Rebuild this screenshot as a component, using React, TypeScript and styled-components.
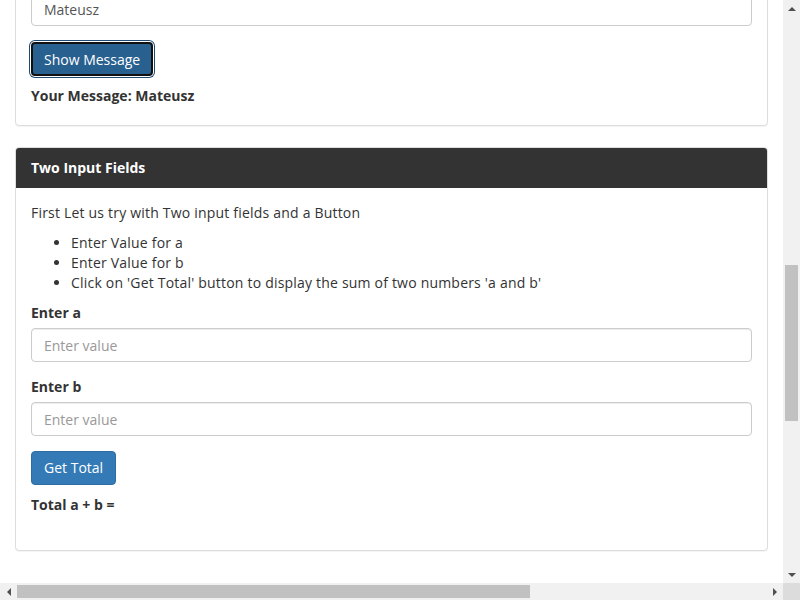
import React, { useLayoutEffect, useRef, useState } from "react";
import styled, { createGlobalStyle } from "styled-components";

const GlobalStyle = createGlobalStyle`
  * { box-sizing: border-box; }
  html, body { margin: 0; padding: 0; overflow: hidden; }
  body {
    font-family: "Open Sans", "Lato", sans-serif;
    font-size: 14px;
    line-height: 20px;
    color: #333;
    background: #fff;
  }
`;

const BAR = 17;

const Frame = styled.div`
  width: 100vw;
  height: 100vh;
  display: grid;
  grid-template-columns: 1fr ${BAR}px;
  grid-template-rows: 1fr ${BAR}px;
`;

const Viewport = styled.div`
  overflow: hidden;
  min-width: 0;
  min-height: 0;
`;

const ScrollBar = styled.div<{ $vertical?: boolean }>`
  display: flex;
  flex-direction: ${(p) => (p.$vertical ? "column" : "row")};
  background: #f1f1f1;
  min-width: 0;
  min-height: 0;
`;

const ArrowButton = styled.div`
  flex: none;
  width: ${BAR}px;
  height: ${BAR}px;
  display: flex;
  align-items: center;
  justify-content: center;
  color: #505050;
`;

const Track = styled.div<{ $vertical?: boolean }>`
  flex: 1;
  display: flex;
  flex-direction: ${(p) => (p.$vertical ? "column" : "row")};
  padding: ${(p) => (p.$vertical ? "0 2px" : "2px 0")};
`;

const Thumb = styled.div`
  flex: none;
  background: #c1c1c1;
`;

const Corner = styled.div`
  background: #dcdcdc;
`;

const Page = styled.div`
  min-height: 2046px;
  display: flex;
  flex-direction: column;
`;

const NavBar = styled.header`
  height: 50px;
  background: #222;
  color: #9d9d9d;
  display: flex;
  align-items: center;
  padding: 0 15px;
  font-size: 18px;
`;

const Container = styled.main`
  padding: 37px 15px 0;
  flex: 1;
`;

const Heading = styled.h2`
  font-size: 30px;
  line-height: 33px;
  font-weight: 700;
  margin: 20px 0 10px;
`;

const Lead = styled.p`
  margin: 0 0 10px;
  letter-spacing: 0.2px;
`;

const Panel = styled.section<{ $gap?: number }>`
  border: 1px solid #ddd;
  border-radius: 4px;
  margin-bottom: ${(p) => p.$gap ?? 20}px;
  box-shadow: 0 1px 1px rgba(0, 0, 0, 0.05);
  background: #fff;
`;

const PanelHeading = styled.div`
  background: #333;
  color: #fff;
  font-weight: 700;
  padding: 10px 15px;
  border-radius: 3px 3px 0 0;
`;

const PanelBody = styled.div<{ $bottom?: number }>`
  padding: 15px 15px ${(p) => p.$bottom ?? 15}px;
`;

const Text = styled.p`
  margin: 0 0 10px;
  letter-spacing: 0.2px;
`;

const Bullets = styled.ul`
  margin: 0 0 10px;
  padding-left: 40px;
  letter-spacing: 0.2px;
`;

const FormGroup = styled.div<{ $gap?: number }>`
  margin-bottom: ${(p) => p.$gap ?? 15}px;
`;

const Label = styled.label`
  display: block;
  font-weight: 700;
  margin-bottom: 5px;
`;

const Input = styled.input`
  display: block;
  width: 100%;
  height: 34px;
  padding: 6px 12px;
  font: inherit;
  color: #555;
  border: 1px solid #ccc;
  border-radius: 4px;
  box-shadow: inset 0 1px 1px rgba(0, 0, 0, 0.075);
  outline: none;
  &::placeholder { color: #999; }
`;

const Button = styled.button<{ $focused?: boolean }>`
  display: inline-block;
  height: 34px;
  padding: 6px ${(p) => (p.$focused ? 11 : 12)}px;
  font: inherit;
  color: #fff;
  background: ${(p) => (p.$focused ? "#286090" : "#337ab7")};
  border: ${(p) => (p.$focused ? "2px solid #111" : "1px solid #2e6da4")};
  border-radius: 4px;
  cursor: pointer;
  box-shadow: ${(p) => (p.$focused ? "0 0 0 1px #fff, 0 0 0 2px #1f4a73" : "none")};
  outline: none;
`;

const Result = styled.div`
  margin-top: 10px;
  font-weight: 700;
`;

const Footer = styled.footer`
  min-width: 1143px;
  padding: 20px 15px;
  border-top: 1px solid #e7e7e7;
  color: #777;
  background: #f8f8f8;
`;

const tips = [
  "Every example has its own panel",
  "Read the short description first",
  "Fill in the fields as described",
  "Use the button under the fields",
  "Check the result under the button",
  "Clear the fields to try again",
  "Try values of different lengths",
  "Move on to the next example",
];

const steps = [
  "Open the page in a supported browser",
  "Wait until the page has fully loaded",
  "Locate the panel you want to test",
  "Inspect the ids of the fields",
  "Write your test against those ids",
];

type Dir = "up" | "down" | "left" | "right";

const ARROWS: Record<Dir, { w: number; h: number; pts: string }> = {
  up: { w: 8, h: 4, pts: "0,4 8,4 4,0" },
  down: { w: 8, h: 4, pts: "0,0 8,0 4,4" },
  left: { w: 4, h: 8, pts: "4,0 4,8 0,4" },
  right: { w: 4, h: 8, pts: "0,0 0,8 4,4" },
};

const Arrow: React.FC<{ dir: Dir }> = ({ dir }) => {
  const a = ARROWS[dir];
  return (
    <ArrowButton>
      <svg width={a.w} height={a.h} viewBox={`0 0 ${a.w} ${a.h}`}>
        <polygon points={a.pts} fill="currentColor" />
      </svg>
    </ArrowButton>
  );
};

interface Bars {
  vTop: number;
  vSize: number;
  hLeft: number;
  hSize: number;
}

export default function App() {
  const viewport = useRef<HTMLDivElement>(null);
  const target = useRef<HTMLElement>(null);
  const [bars, setBars] = useState<Bars>({ vTop: 0, vSize: 0, hLeft: 0, hSize: 0 });

  useLayoutEffect(() => {
    const view = viewport.current;
    const el = target.current;
    if (!view || !el) return;
    view.scrollTop = el.offsetTop - 147;
    view.scrollLeft = 0;

    const vTrack = view.clientHeight - 2 * BAR;
    const vSize = (vTrack * view.clientHeight) / view.scrollHeight;
    const vRange = view.scrollHeight - view.clientHeight;
    const vTop = vRange > 0 ? ((vTrack - vSize) * view.scrollTop) / vRange : 0;

    const hTrack = view.clientWidth - 2 * BAR;
    const hSize = (hTrack * view.clientWidth) / view.scrollWidth;
    const hRange = view.scrollWidth - view.clientWidth;
    const hLeft = hRange > 0 ? ((hTrack - hSize) * view.scrollLeft) / hRange : 0;

    setBars({ vTop, vSize, hLeft, hSize });
  }, []);

  return (
    <>
      <GlobalStyle />
      <Frame>
        <Viewport ref={viewport}>
          <Page>
            <NavBar>Selenium Easy</NavBar>
            <Container>
              <Heading>Simple Form Demo</Heading>
              <Lead>This would be your first example to start with Selenium.</Lead>
              <Lead>Here we will be using input field and a button to display the message you have entered.</Lead>

              <Panel>
                <PanelHeading>Before you start</PanelHeading>
                <PanelBody>
                  <Text>A few things to check before writing your first test.</Text>
                  <Bullets>
                    {steps.map((s) => (
                      <li key={s}>{s}</li>
                    ))}
                  </Bullets>
                </PanelBody>
              </Panel>

              <Panel>
                <PanelHeading>How to use this page</PanelHeading>
                <PanelBody>
                  <Text>Each panel below holds one small form to practise on.</Text>
                  <Bullets>
                    {tips.map((t) => (
                      <li key={t}>{t}</li>
                    ))}
                  </Bullets>
                </PanelBody>
              </Panel>

              <Panel $gap={21}>
                <PanelHeading>Single Input Field</PanelHeading>
                <PanelBody $bottom={19}>
                  <Text>Enter a message in the input field and click the button below</Text>
                  <Bullets>
                    <li>Enter your message</li>
                    <li>Click on 'Show Message' button</li>
                    <li>The message you entered is displayed below the button</li>
                  </Bullets>
                  <FormGroup $gap={16}>
                    <Label>Enter message</Label>
                    <Input defaultValue="Mateusz" placeholder="Please enter your Message" />
                  </FormGroup>
                  <Button $focused>Show Message</Button>
                  <Result>Your Message: Mateusz</Result>
                </PanelBody>
              </Panel>

              <Panel ref={target}>
                <PanelHeading>Two Input Fields</PanelHeading>
                <PanelBody $bottom={35}>
                  <Text>First Let us try with Two input fields and a Button</Text>
                  <Bullets>
                    <li>Enter Value for a</li>
                    <li>Enter Value for b</li>
                    <li>Click on 'Get Total' button to display the sum of two numbers 'a and b'</li>
                  </Bullets>
                  <FormGroup>
                    <Label>Enter a</Label>
                    <Input placeholder="Enter value" />
                  </FormGroup>
                  <FormGroup>
                    <Label>Enter b</Label>
                    <Input placeholder="Enter value" />
                  </FormGroup>
                  <Button>Get Total</Button>
                  <Result>Total a + b =</Result>
                </PanelBody>
              </Panel>
            </Container>
            <Footer>© Selenium Easy — demo pages for practising test automation</Footer>
          </Page>
        </Viewport>

        <ScrollBar $vertical>
          <Arrow dir="up" />
          <Track $vertical>
            <Thumb style={{ marginTop: bars.vTop, height: bars.vSize }} />
          </Track>
          <Arrow dir="down" />
        </ScrollBar>

        <ScrollBar>
          <Arrow dir="left" />
          <Track>
            <Thumb style={{ marginLeft: bars.hLeft, width: bars.hSize }} />
          </Track>
          <Arrow dir="right" />
        </ScrollBar>

        <Corner />
      </Frame>
    </>
  );
}
